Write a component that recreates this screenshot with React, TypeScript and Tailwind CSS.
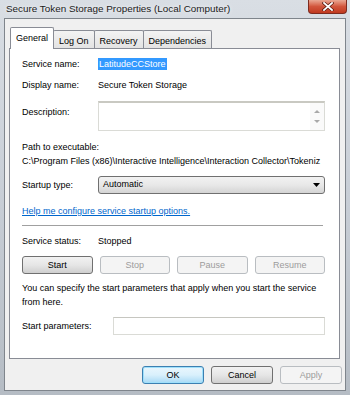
import React from 'react'

const font = "font-['Liberation_Sans',Arial,sans-serif]"

function Btn({ label, disabled, primary }: { label: string; disabled?: boolean; primary?: boolean }) {
  const base = 'h-[18px] rounded-[3px] border flex items-center justify-center text-[9px] leading-none'
  if (disabled)
    return <div className={`${base} border-[#b9bdc1] bg-[#f4f4f4] text-[#9c9c9c]`}>{label}</div>
  if (primary)
    return (
      <div className={`${base} border-[#3c7fb1] bg-gradient-to-b from-[#eaf6fd] via-[#d9f0fc] to-[#a7d9f5] text-black shadow-[inset_0_0_0_1px_#9fe0fb]`}>
        {label}
      </div>
    )
  return (
    <div className={`${base} border-[#707070] bg-gradient-to-b from-[#f2f2f2] via-[#e6e6e6] to-[#cfcfcf] text-black`}>
      {label}
    </div>
  )
}

function Tab({ label, active }: { label: string; active?: boolean }) {
  if (active)
    return (
      <div className="relative z-10 -mb-px h-[22px] px-[5px] pt-[4px] bg-white border border-b-0 border-[#898c95] rounded-t-[2px] text-[9px] leading-[12px]">
        {label}
      </div>
    )
  return (
    <div className="h-[18px] px-[5px] pt-[4px] -ml-px bg-gradient-to-b from-[#f3f3f3] to-[#e3e3e3] border border-b-0 border-[#898c95] rounded-t-[2px] text-[9px] leading-[12px]">
      {label}
    </div>
  )
}

function Row({ label, children }: { label: string; children: React.ReactNode }) {
  return (
    <div className="flex items-center h-[12px] leading-[12px]">
      <div className="w-[76px] shrink-0">{label}</div>
      {children}
    </div>
  )
}

export default function App() {
  return (
    <div className={`${font} w-[350px] h-[395px] flex flex-col bg-gradient-to-b from-[#d9dee4] via-[#c8ced6] to-[#b5bcc4] text-black overflow-hidden`}>
      {/* Title bar */}
      <div className="h-[18px] shrink-0 flex items-start">
        <div className="pl-[6px] pt-[3px] text-[9.9px] leading-[12px] text-[#1a1a1a] [text-shadow:0_0_4px_#ffffff]">
          Secure Token Storage Properties (Local Computer)
        </div>
        <div className="ml-auto mr-[3px] w-[39px] h-[14px] rounded-b-[4px] border border-t-0 border-[#7d2b1f] bg-gradient-to-b from-[#e9a793] via-[#d2553c] to-[#c0391f] flex items-center justify-center">
          <svg width="12" height="9" viewBox="0 0 12 9">
            <path d="M2 1 L10 8 M10 1 L2 8" stroke="#5a1a10" strokeWidth="3.2" strokeLinecap="square" />
            <path d="M2 1 L10 8 M10 1 L2 8" stroke="#ffffff" strokeWidth="1.8" strokeLinecap="square" />
          </svg>
        </div>
      </div>

      {/* Client area */}
      <div className="mx-[4px] h-[373px] shrink-0 border border-[#7f858c] bg-[#f0f0f0] flex flex-col">
        {/* Tabs */}
        <div className="pt-[8px] pl-[5px] h-[29px] flex items-end">
          <Tab label="General" active />
          <Tab label="Log On" />
          <Tab label="Recovery" />
          <Tab label="Dependencies" />
        </div>

        {/* Panel */}
        <div className="ml-[4px] mr-[5px] h-[311px] border border-[#898c95] bg-white pl-[12px] pr-[14px] pt-[9px] text-[9px]">
          <Row label="Service name:">
            <span className="bg-[#3399ff] text-white px-[1px]">LatitudeCCStore</span>
          </Row>
          <div className="mt-[9px]">
            <Row label="Display name:">
              <span>Secure Token Storage</span>
            </Row>
          </div>

          <div className="mt-[10px] flex">
            <div className="w-[76px] shrink-0 pt-[5px] leading-[12px]">Description:</div>
            <div className="flex-1 h-[30px] border border-[#dadbd6] border-t-2 border-t-[#c9c9c2] flex justify-end">
              <div className="w-[14px] flex flex-col items-center justify-center gap-[7px] bg-[#fafafa]">
                <svg width="6" height="3" viewBox="0 0 6 3"><path d="M0 3 L3 0 L6 3 Z" fill="#a9a9a9" /></svg>
                <svg width="6" height="3" viewBox="0 0 6 3"><path d="M0 0 L6 0 L3 3 Z" fill="#a9a9a9" /></svg>
              </div>
            </div>
          </div>

          <div className="mt-[10px] leading-[12px]">Path to executable:</div>
          <div className="mt-[2px] leading-[12px] whitespace-nowrap">
            C:\Program Files (x86)\Interactive Intelligence\Interaction Collector\Tokeniz
          </div>

          <div className="mt-[9px] flex items-center">
            <div className="w-[76px] shrink-0 leading-[12px]">Startup type:</div>
            <div className="flex-1 h-[18px] rounded-[3px] border border-[#707070] bg-gradient-to-b from-[#f2f2f2] via-[#e8e8e8] to-[#d4d4d4] flex items-center pl-[4px] pr-[4px]">
              <span>Automatic</span>
              <svg className="ml-auto" width="7" height="4" viewBox="0 0 7 4"><path d="M0 0 L7 0 L3.5 4 Z" fill="#000000" /></svg>
            </div>
          </div>

          <div className="mt-[11px] leading-[12px] text-[#0066cc] underline">Help me configure service startup options.</div>

          <div className="mt-[8px] border-t border-[#a0a0a0] mr-[2px]" />

          <div className="mt-[9px]">
            <Row label="Service status:">
              <span>Stopped</span>
            </Row>
          </div>

          <div className="mt-[9px] grid grid-cols-4 gap-[7px]">
            <Btn label="Start" />
            <Btn label="Stop" disabled />
            <Btn label="Pause" disabled />
            <Btn label="Resume" disabled />
          </div>

          <div className="mt-[7px] leading-[14px]">
            You can specify the start parameters that apply when you start the service from here.
          </div>

          <div className="mt-[8px] flex items-center">
            <div className="w-[91px] shrink-0 leading-[12px]">Start parameters:</div>
            <div className="flex-1 h-[18px] border border-[#dadbd6] border-t-[#c6c6c0] bg-white" />
          </div>
        </div>

        {/* Dialog buttons */}
        <div className="mt-[7px] pr-[3px] flex justify-end gap-[7px]">
          <div className="w-[62px]"><Btn label="OK" primary /></div>
          <div className="w-[62px]"><Btn label="Cancel" /></div>
          <div className="w-[62px]"><Btn label="Apply" disabled /></div>
        </div>
      </div>
    </div>
  )
}
